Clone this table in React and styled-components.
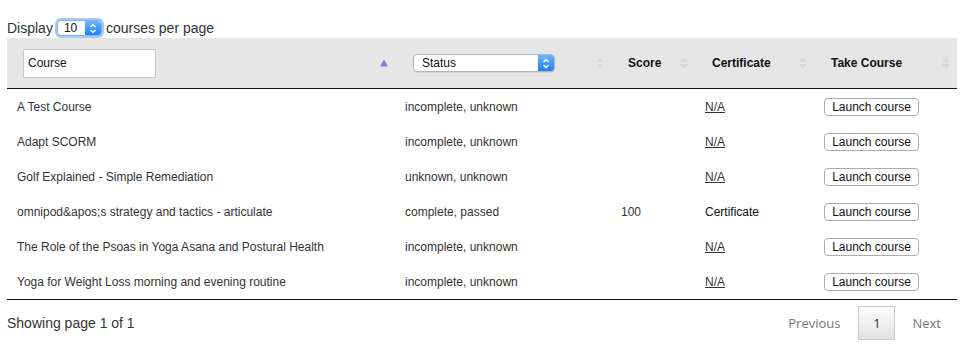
import styled, { createGlobalStyle } from "styled-components"

const Global = createGlobalStyle`
  body {
    margin: 0;
    background: #fff;
    font-family: "Liberation Sans", Arial, sans-serif;
    color: #333;
  }
`

const Page = styled.div`
  padding: 0 10px 0 7px;
`

const TopBar = styled.div`
  display: flex;
  align-items: center;
  gap: 4px;
  padding-top: 18px;
  height: 20px;
  font-size: 14px;
  color: #333;
`

const SelectBox = styled.div`
  display: flex;
  align-items: stretch;
  box-sizing: border-box;
  width: ${props => props.w}px;
  height: ${props => props.h}px;
  background: #fff;
  border: 1px solid ${props => props.focus ? "#7fb0ee" : "#b5b5b5"};
  border-radius: 4px;
  box-shadow: ${props => props.focus ? "0 0 0 2px #a9c9f5" : "0 1px 1px rgba(0,0,0,0.08)"};
  font-size: 12px;
  font-weight: normal;
  color: #111;
  overflow: hidden;
`

const SelectText = styled.span`
  flex: 1;
  display: flex;
  align-items: center;
  padding-left: ${props => props.pl}px;
`

const SelectArrow = styled.span`
  width: 16px;
  display: flex;
  align-items: center;
  justify-content: center;
  background: linear-gradient(#6cb5fb, #1c7ff3);
`

const Grid = styled.div`
  display: grid;
  grid-template-columns: 388px 216px 84px 119px 143px;
`

const HeadCell = styled.div`
  display: flex;
  align-items: center;
  height: 50px;
  padding: 0 7px 0 ${props => props.pl || 17}px;
  background: #e6e6e6;
  border-bottom: 1px solid #111;
  font-size: 12px;
  font-weight: bold;
  color: #111;
`

const HeadLabel = styled.span`
  flex: 1;
`

const SortIcon = styled.svg`
  flex: none;
  margin-left: auto;
`

const SearchInput = styled.div`
  box-sizing: border-box;
  width: 133px;
  height: 29px;
  background: #fff;
  border: 1px solid #c8c8c8;
  display: flex;
  align-items: center;
  padding-left: 4px;
  font-size: 12px;
  font-weight: normal;
  color: #111;
`

const Cell = styled.div`
  display: flex;
  align-items: center;
  height: 35px;
  padding-left: 10px;
  font-size: 12px;
  color: ${props => props.dark ? "#111" : "#333"};
  border-bottom: ${props => props.last ? "1px solid #111" : "none"};
`

const NALink = styled.span`
  text-decoration: underline;
  color: #333;
`

const LaunchButton = styled.button`
  box-sizing: border-box;
  width: 95px;
  height: 18px;
  padding: 0;
  background: #fff;
  border: 1px solid #adadad;
  border-radius: 4px;
  font-family: "Liberation Sans", Arial, sans-serif;
  font-size: 12px;
  color: #111;
`

const Footer = styled.div`
  display: flex;
  justify-content: space-between;
  align-items: center;
  margin-top: 6px;
  width: 950px;
  font-size: 14px;
`

const Pager = styled.div`
  display: flex;
  align-items: center;
  font-family: "Open Sans", sans-serif;
  font-size: 13px;
  color: #777;
`

const PageLink = styled.span`
  padding: 0 ${props => props.pr || 0}px 0 ${props => props.pl || 0}px;
`

const PageButton = styled.span`
  box-sizing: border-box;
  width: 37px;
  height: 34px;
  margin: 0 17px 0 18px;
  display: flex;
  align-items: center;
  justify-content: center;
  border: 1px solid #cacaca;
  background: linear-gradient(#fdfdfd, #e2e2e2);
  color: #333;
`

const Chevron = () => (
  <svg width="8" height="11" viewBox="0 0 8 11">
    <path d="M1.5 4 L4 1.5 L6.5 4 M1.5 7 L4 9.5 L6.5 7" fill="none" stroke="#fff" strokeWidth="1.4" />
  </svg>
)

const BothSort = () => (
  <SortIcon width="8" height="14" viewBox="0 0 8 14">
    <path d="M0 6 L4 1 L8 6 Z M0 8 L4 13 L8 8 Z" fill="#d8d8d8" />
  </SortIcon>
)

const AscSort = () => (
  <SortIcon width="8" height="8" viewBox="0 0 8 8">
    <path d="M0 7.5 L4 0.5 L8 7.5 Z" fill="#7c80e0" />
  </SortIcon>
)

const rows = [
  { name: "A Test Course", status: "incomplete, unknown", score: "", cert: false },
  { name: "Adapt SCORM", status: "incomplete, unknown", score: "", cert: false },
  { name: "Golf Explained - Simple Remediation", status: "unknown, unknown", score: "", cert: false },
  { name: "omnipod&apos;s strategy and tactics - articulate", status: "complete, passed", score: "100", cert: true },
  { name: "The Role of the Psoas in Yoga Asana and Postural Health", status: "incomplete, unknown", score: "", cert: false },
  { name: "Yoga for Weight Loss morning and evening routine", status: "incomplete, unknown", score: "", cert: false },
]

const App = () => {
  return (
    <Page>
      <Global />
      <TopBar>
        <span>Display</span>
        <SelectBox w={45} h={16} focus>
          <SelectText pl={6}>10</SelectText>
          <SelectArrow><Chevron /></SelectArrow>
        </SelectBox>
        <span>courses per page</span>
      </TopBar>
      <Grid>
        <HeadCell pl={16}>
          <SearchInput>Course</SearchInput>
          <AscSort />
        </HeadCell>
        <HeadCell pl={18}>
          <SelectBox w={142} h={18}>
            <SelectText pl={8}>Status</SelectText>
            <SelectArrow><Chevron /></SelectArrow>
          </SelectBox>
          <BothSort />
        </HeadCell>
        <HeadCell>
          <HeadLabel>Score</HeadLabel>
          <BothSort />
        </HeadCell>
        <HeadCell>
          <HeadLabel>Certificate</HeadLabel>
          <BothSort />
        </HeadCell>
        <HeadCell>
          <HeadLabel>Take Course</HeadLabel>
          <BothSort />
        </HeadCell>
        {rows.map((r, i) => {
          const last = i === rows.length - 1
          return [
            <Cell key={i + "a"} last={last}>{r.name}</Cell>,
            <Cell key={i + "b"} last={last}>{r.status}</Cell>,
            <Cell key={i + "c"} last={last}>{r.score}</Cell>,
            <Cell key={i + "d"} last={last} dark={r.cert}>
              {r.cert ? "Certificate" : <NALink>N/A</NALink>}
            </Cell>,
            <Cell key={i + "e"} last={last}>
              <LaunchButton>Launch course</LaunchButton>
            </Cell>,
          ]
        })}
      </Grid>
      <Footer>
        <span>Showing page 1 of 1</span>
        <Pager>
          <PageLink>Previous</PageLink>
          <PageButton>1</PageButton>
          <PageLink pr={16}>Next</PageLink>
        </Pager>
      </Footer>
    </Page>
  )
}

export default App
